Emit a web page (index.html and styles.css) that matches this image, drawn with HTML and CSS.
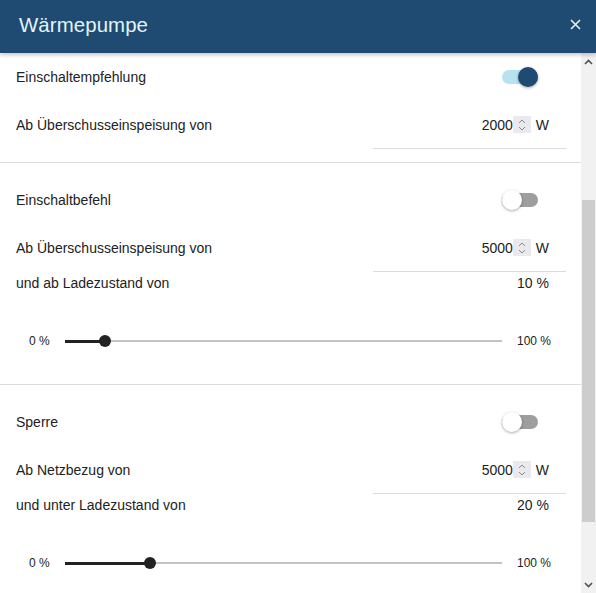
FILE: index.html
```html
<!DOCTYPE html>
<html lang="de">
<head>
<meta charset="utf-8">
<title>Wärmepumpe</title>
<link rel="stylesheet" href="styles.css">
</head>
<body>
<div class="dialog">
  <header class="header">
    <h1 class="title">Wärmepumpe</h1>
    <button class="close" aria-label="Schließen">
      <svg width="11" height="11" viewBox="0 0 11 11"><path d="M1 1L10 10M10 1L1 10" stroke="#e3f4fc" stroke-width="1.6" fill="none"/></svg>
    </button>
  </header>
  <div class="body">
    <div class="content">
      <div class="list">
        <section class="section">
          <div class="row toggle-row">
            <span class="label">Einschaltempfehlung</span>
            <span class="toggle on"><span class="track"></span><span class="knob"></span></span>
          </div>
          <div class="row input-row">
            <span class="label">Ab Überschusseinspeisung von</span>
            <span class="field"><span class="num">2000</span><span class="spin"><svg width="10" height="14" viewBox="0 0 10 14"><path d="M2 5L5 2L8 5M2 9L5 12L8 9" stroke="#8a8a8a" stroke-width="1" fill="none"/></svg></span><span class="unit">W</span></span>
          </div>
        </section>
        <section class="section">
          <div class="row toggle-row">
            <span class="label">Einschaltbefehl</span>
            <span class="toggle"><span class="track"></span><span class="knob"></span></span>
          </div>
          <div class="row input-row">
            <span class="label">Ab Überschusseinspeisung von</span>
            <span class="field"><span class="num">5000</span><span class="spin"><svg width="10" height="14" viewBox="0 0 10 14"><path d="M2 5L5 2L8 5M2 9L5 12L8 9" stroke="#8a8a8a" stroke-width="1" fill="none"/></svg></span><span class="unit">W</span></span>
          </div>
          <div class="row value-row">
            <span class="label">und ab Ladezustand von</span>
            <span class="value">10 %</span>
          </div>
          <div class="slider-row">
            <span class="smin">0 %</span>
            <span class="slider"><span class="fill" style="width: 9.2%"></span><span class="thumb" style="left: 9.2%"></span></span>
            <span class="smax">100 %</span>
          </div>
        </section>
        <section class="section">
          <div class="row toggle-row">
            <span class="label">Sperre</span>
            <span class="toggle"><span class="track"></span><span class="knob"></span></span>
          </div>
          <div class="row input-row">
            <span class="label">Ab Netzbezug von</span>
            <span class="field"><span class="num">5000</span><span class="spin"><svg width="10" height="14" viewBox="0 0 10 14"><path d="M2 5L5 2L8 5M2 9L5 12L8 9" stroke="#8a8a8a" stroke-width="1" fill="none"/></svg></span><span class="unit">W</span></span>
          </div>
          <div class="row value-row">
            <span class="label">und unter Ladezustand von</span>
            <span class="value">20 %</span>
          </div>
          <div class="slider-row">
            <span class="smin">0 %</span>
            <span class="slider"><span class="fill" style="width: 19.4%"></span><span class="thumb" style="left: 19.4%"></span></span>
            <span class="smax">100 %</span>
          </div>
        </section>
      </div>
    </div>
    <div class="scrollbar">
      <span class="sb-btn"><svg width="9" height="6" viewBox="0 0 9 6"><path d="M1 5L4.5 1.5L8 5" stroke="#505050" stroke-width="1.6" fill="none"/></svg></span>
      <span class="sb-gap-top"></span>
      <span class="sb-thumb"></span>
      <span class="sb-gap-bottom"></span>
      <span class="sb-btn"><svg width="9" height="6" viewBox="0 0 9 6"><path d="M1 1L4.5 4.5L8 1" stroke="#505050" stroke-width="1.6" fill="none"/></svg></span>
    </div>
  </div>
</div>
</body>
</html>
```
FILE: styles.css
```css
* { box-sizing: border-box; }
html, body { margin: 0; padding: 0; }
body {
  width: 596px;
  height: 593px;
  overflow: hidden;
  font-family: "Liberation Sans", Arial, sans-serif;
  color: #222;
  background: #fff;
}
.dialog {
  display: flex;
  flex-direction: column;
  height: 593px;
}
.header {
  position: relative;
  z-index: 2;
  height: 53px;
  flex: 0 0 53px;
  background: #1f4a72;
  display: flex;
  align-items: center;
  justify-content: space-between;
  padding: 0 15px 0 19px;
  box-shadow: 0 2px 4px rgba(0,0,0,0.22);
}
.title {
  margin: 0;
  font-size: 20.4px;
  font-weight: normal;
  color: #e3f4fc;
  letter-spacing: 0.1px;
  padding-bottom: 2px;
}
.close {
  border: 0;
  background: none;
  padding: 0;
  width: 11px;
  height: 11px;
  display: flex;
  margin-bottom: 5px;
}
.body {
  flex: 1;
  display: flex;
  overflow: hidden;
}
.content {
  flex: 1;
  overflow: hidden;
}
.list {
  margin-top: -13px;
}
.section {
  border-bottom: 1px solid #dcdcdc;
  padding-top: 14px;
}
.section:first-child {
  padding-bottom: 13px;
}
.row {
  display: flex;
  align-items: center;
  justify-content: space-between;
  padding: 0 15px 0 16px;
  font-size: 14px;
}
.toggle-row { height: 46px; }
.input-row {
  height: 49px;
  align-items: flex-start;
  padding-top: 15px;
}
.value-row { height: 22px; }
.label { line-height: 20px; }
.toggle {
  position: relative;
  width: 36px;
  height: 20px;
  margin-right: 28px;
}
.toggle .track {
  position: absolute;
  left: 0;
  top: 3px;
  width: 36px;
  height: 14px;
  border-radius: 7px;
  background: #9e9e9e;
}
.toggle .knob {
  position: absolute;
  left: 0;
  top: 0;
  width: 20px;
  height: 20px;
  border-radius: 50%;
  background: #fff;
  box-shadow: 0 1px 3px rgba(0,0,0,0.35);
}
.toggle.on .track { background: #b7e3f0; }
.toggle.on .knob {
  left: 16px;
  background: #1f4a72;
}
.field {
  width: 193px;
  height: 34px;
  border-bottom: 1px solid #dcdcdc;
  display: flex;
  align-items: flex-start;
  justify-content: flex-end;
  padding-right: 17px;
  line-height: 20px;
}
.spin {
  width: 18px;
  height: 17px;
  margin-top: 1px;
  background: #e9e9ee;
  display: flex;
  align-items: center;
  justify-content: center;
}
.unit { margin-left: 5px; }
.value { padding-right: 17px; }
.slider-row {
  display: flex;
  align-items: center;
  height: 32px;
  margin: 31px 0 27px;
  padding: 0 30px 0 29px;
  font-size: 12px;
  color: #222;
}
.slider {
  position: relative;
  flex: 1;
  height: 2px;
  margin: 0 15px;
  background: #c4c4c4;
}
.fill {
  position: absolute;
  left: 0;
  top: -0.5px;
  height: 3px;
  background: #222;
}
.thumb {
  position: absolute;
  top: -5px;
  width: 12px;
  height: 12px;
  margin-left: -6px;
  border-radius: 50%;
  background: #222;
}
.scrollbar {
  flex: 0 0 15px;
  width: 15px;
  display: flex;
  flex-direction: column;
  background: #f1f1f1;
}
.sb-btn {
  height: 17px;
  flex: 0 0 17px;
  display: flex;
  align-items: center;
  justify-content: center;
}
.sb-gap-top { flex: 0 0 130px; }
.sb-thumb {
  flex: 0 0 322px;
  margin: 0 1px;
  background: #cdcdcd;
}
.sb-gap-bottom { flex: 1; }
```
